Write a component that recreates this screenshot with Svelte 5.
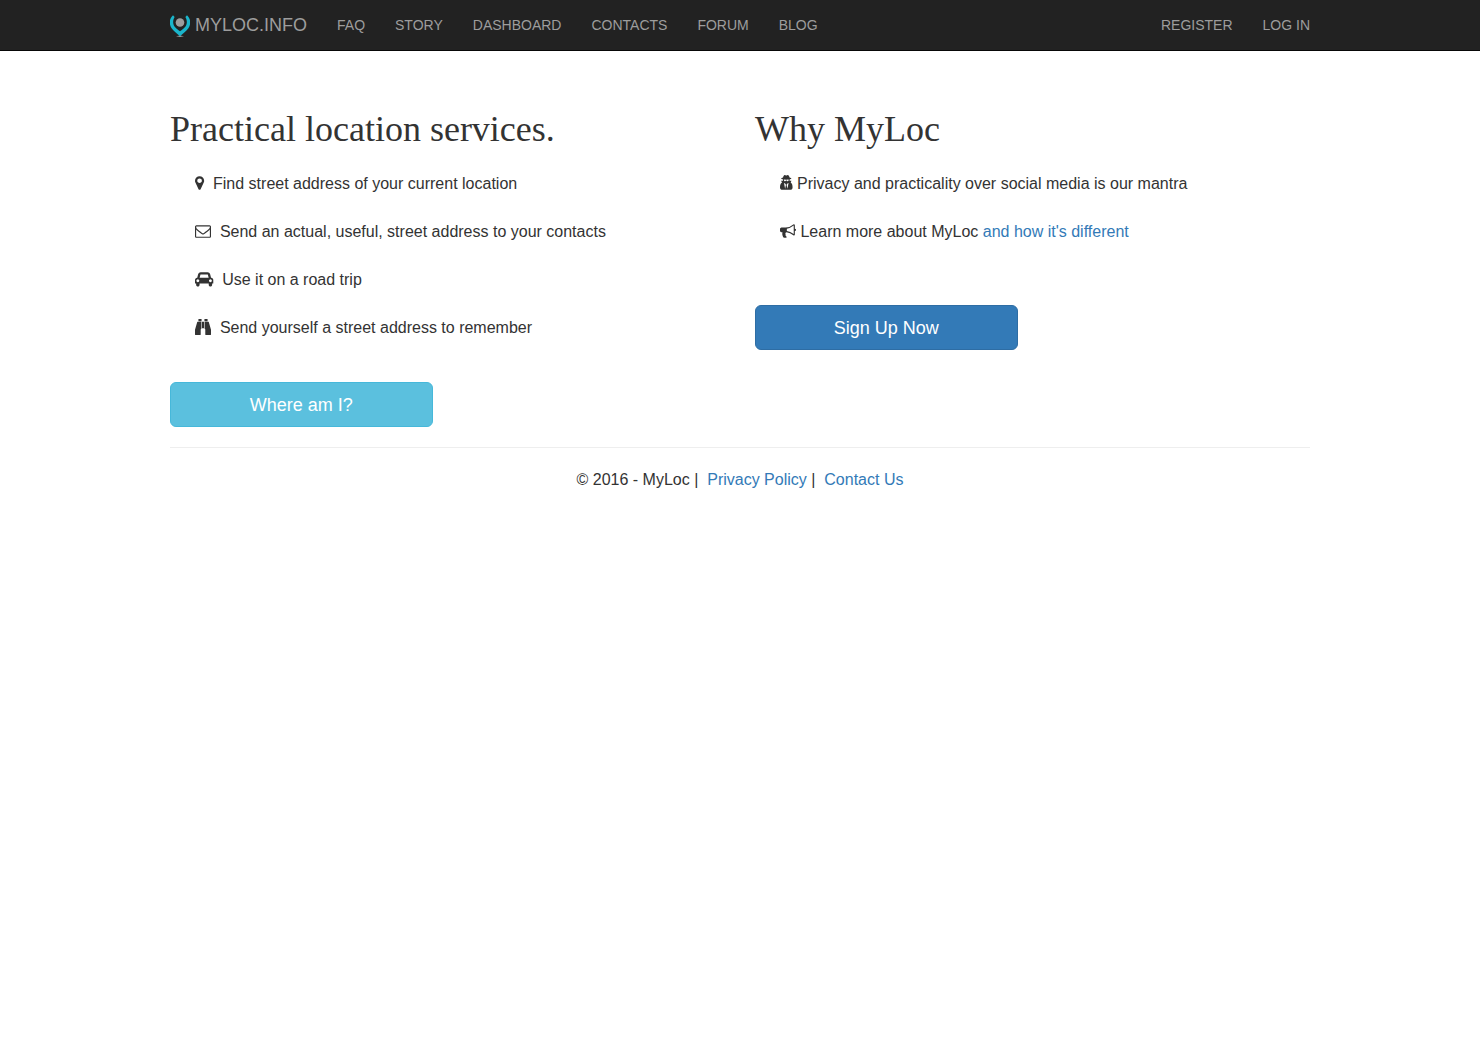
<script>
  const links = ['FAQ', 'Story', 'Dashboard', 'Contacts', 'Forum', 'Blog'];
  const account = ['Register', 'Log in'];

  // Each glyph is drawn on a grid 1792 units high, with its own width.
  const icons = {
    marker: {
      box: '0 0 1024 1792',
      d: 'M768 640q0-106-75-181t-181-75-181 75-75 181 75 181 181 75 181-75 75-181zm256 0q0 109-33 179l-364 774q-16 33-47.500 52t-67.500 19-67.500-19-46.500-52l-365-774q-33-70-33-179 0-212 150-362t362-150 362 150 150 362z'
    },
    envelope: {
      box: '0 0 1792 1792',
      d: 'M1664 1504v-768q-32 36-69 66-268 206-426 338-51 43-83 67t-86.500 48.500-102.500 24.500h-2q-48 0-102.500-24.500t-86.500-48.500-83-67q-158-132-426-338-37-30-69-66v768q0 13 9.500 22.500t22.500 9.500h1472q13 0 22.500-9.500t9.500-22.500zm0-1051v-24.500l-.5-13-3-12.500-5.500-9-9-7.500-14-2.500h-1472q-13 0-22.500 9.500t-9.500 22.500q0 168 147 284 193 152 401 317 6 5 35 29.500t46 37.500 44.500 31.500 50.500 27.500 43 9h2q20 0 43-9t50.500-27.500 44.500-31.500 46-37.500 35-29.500q208-165 401-317 54-43 100.500-115.500t46.500-131.500zm128-37v1088q0 66-47 113t-113 47h-1472q-66 0-113-47t-47-113v-1088q0-66 47-113t113-47h1472q66 0 113 47t47 113z'
    },
    car: {
      box: '0 0 2048 1792',
      d: 'M480 1088q0-66-47-113t-113-47-113 47-47 113 47 113 113 47 113-47 47-113zm36-320h1016l-89-357q-2-8-14-17.500t-21-9.500h-768q-9 0-21 9.500t-14 17.500zm1372 320q0-66-47-113t-113-47-113 47-47 113 47 113 113 47 113-47 47-113zm160-96v384q0 14-9 23t-23 9h-96v128q0 80-56 136t-136 56-136-56-56-136v-128h-1024v128q0 80-56 136t-136 56-136-56-56-136v-128h-96q-14 0-23-9t-9-23v-384q0-93 65.500-158.500t158.500-65.500h28l105-419q23-94 104-157.500t179-63.500h768q98 0 179 63.500t104 157.500l105 419h28q93 0 158.500 65.500t65.500 158.500z'
    },
    binoculars: {
      box: '0 0 1792 1792',
      d: 'M704 320v768q0 26-19 45t-45 19v576q0 26-19 45t-45 19h-512q-26 0-45-19t-19-45v-512l249-873q7-23 31-23zm320 0v704h-256v-704zm768 896v512q0 26-19 45t-45 19h-512q-26 0-45-19t-19-45v-576q-26 0-45-19t-19-45v-768h424q24 0 31 23zm-1056-1184v224h-352v-224q0-14 9-23t23-9h288q14 0 23 9t9 23zm672 0v224h-352v-224q0-14 9-23t23-9h288q14 0 23 9t9 23z'
    },
    secret: {
      box: '0 0 1408 1792',
      d: 'M576 1536l96-448-96-128-128-64zm256 0l128-640-128 64-96 128zm160-1010q-2-4-4-6-10-8-96-8-70 0-167 19-7 2-21 2t-21-2q-97-19-167-19-86 0-96 8-2 2-4 6 2 18 4 27 2 3 7.500 6.500t7.500 10.500q2 4 7.500 20.500t7 20.500 7.500 17 8.500 17 9 14 12 13.500 14 9.500 17.500 8 20.500 4 24.500 2q36 0 59-12.500t32.500-30 14.500-34.500 11.500-29.500 17.500-12.500h12q11 0 17.500 12.500t11.500 29.500 14.500 34.500 32.500 30 59 12.500q13 0 24.500-2t20.500-4 17.500-8 14-9.500 12-13.500 9-14 8.500-17 7.500-17 7-20.500 7.500-20.500q2-7 7.500-10.500t7.500-6.500q2-9 4-27zm416 879q0 121-73 190t-194 69h-874q-121 0-194-69t-73-190q0-61 4.500-118t19-125.500 37.500-123.500 63.500-103.500 93.500-74.500l-90-220h214q-22-64-22-128 0-12 2-32-194-40-194-96 0-57 210-99 17-62 51.500-134t70.500-114q32-37 76-37 30 0 84 31t84 31 84-31 84-31q44 0 76 37 36 42 70.500 114t51.500 134q210 42 210 99 0 56-194 96 7 81-20 160h214l-82 225q63 33 107.500 96.500t65.500 143.500 29 151.500 8 148.500z'
    },
    bullhorn: {
      box: '0 0 1792 1792',
      d: 'M1664 640q53 0 90.500 37.500t37.500 90.500-37.500 90.500-90.500 37.500v384q0 52-38 90t-90 38q-417-347-812-380-58 19-91 66t-31 100.500 40 92.500q-20 33-23 65.500t6 58 33.500 55 48 50 61.500 50.500q-29 58-111.500 83t-168.500 11.500-132-55.500q-7-23-29.500-87.500t-32-94.500-23-89-15-101 3.500-98.500 22-110.500h-122q-66 0-113-47t-47-113v-192q0-66 47-113t113-47h480q435 0 896-384 52 0 90 38t38 90v384zm-128 604v-954q-394 302-768 343v270q377 42 768 341z'
    }
  };

  const features = [
    { icon: 'marker', text: 'Find street address of your current location' },
    { icon: 'envelope', text: 'Send an actual, useful, street address to your contacts' },
    { icon: 'car', text: 'Use it on a road trip' },
    { icon: 'binoculars', text: 'Send yourself a street address to remember' }
  ];
</script>

{#snippet glyph(name)}
  <svg class="icon" viewBox={icons[name].box} aria-hidden="true"><path d={icons[name].d} /></svg>
{/snippet}

<header>
  <nav class="container">
    <a class="brand" href="#home">
      <svg class="logo" viewBox="0 0 20 22" aria-hidden="true">
        <path d="M6 21.200l4-.8 4 .8-4 .8z" />
        <path class="pin" d="M3 .3C-1.300 4.200-.8 9.500 1.600 13.200 3.500 16 7 18.500 10 21.200c3-2.700 6.500-5.200 8.400-8C20.800 9.500 21.300 4.200 17 .3L15.400 2c1.800 3 2 6.800.1 9.600-1.200 1.700-2.600 2.400-3.700 3.300L10 16.300l-1.800-1.400c-1.100-.9-2.500-1.600-3.700-3.300C2.600 8.800 2.800 5 4.600 2z" />
        <circle cx="10" cy="7.500" r="4.300" />
      </svg>
      <span>myloc.info</span>
    </a>
    <ul class="menu">
      {#each links as link}
        <li><a href="#{link.toLowerCase()}">{link}</a></li>
      {/each}
    </ul>
    <ul class="menu account">
      {#each account as link}
        <li><a href="#{link.toLowerCase().replace(' ', '-')}">{link}</a></li>
      {/each}
    </ul>
  </nav>
</header>

<main class="container">
  <div class="columns">
    <section>
      <h1>Practical location services.</h1>
      <ul class="points">
        {#each features as feature}
          <li>{@render glyph(feature.icon)}&nbsp; {feature.text}</li>
        {/each}
      </ul>
      <button class="info" type="button">Where am I?</button>
    </section>
    <section>
      <h1>Why MyLoc</h1>
      <ul class="points short">
        <li>{@render glyph('secret')} Privacy and practicality over social media is our mantra</li>
        <li>{@render glyph('bullhorn')} Learn more about MyLoc <a href="#different">and how it's different</a></li>
      </ul>
      <button class="primary" type="button">Sign Up Now</button>
    </section>
  </div>
  <footer>© 2016 - MyLoc |&nbsp; <a href="#privacy">Privacy Policy</a> |&nbsp; <a href="#contact">Contact Us</a></footer>
</main>

<style>
  :global(body) {
    margin: 0;
    background: #fff;
    color: #333;
    font: 16px/24px "Liberation Sans", Arial, sans-serif;
  }
  .container {
    box-sizing: border-box;
    max-width: 1170px;
    margin: 0 auto;
    padding: 0 15px;
  }
  ul {
    list-style: none;
    margin: 0;
    padding: 0;
  }
  a {
    color: #337ab7;
    text-decoration: none;
  }
  header {
    background: #222;
    border-bottom: 1px solid #080808;
  }
  nav {
    display: flex;
    align-items: center;
    gap: 30px;
    min-height: 50px;
    text-transform: uppercase;
  }
  nav a {
    color: #9d9d9d;
  }
  .brand {
    display: flex;
    align-items: center;
    gap: 5px;
    font-size: 18px;
    line-height: 20px;
  }
  .logo {
    width: 20px;
    height: 22px;
    margin-top: 2px;
    fill: #9d9d9d;
  }
  .pin {
    fill: #1ab5cb;
  }
  .menu {
    display: flex;
    gap: 30px;
    font-size: 14px;
    line-height: 20px;
  }
  .account {
    margin-left: auto;
  }
  .columns {
    display: grid;
    grid-template-columns: repeat(auto-fit, minmax(min(100%, 400px), 1fr));
    gap: 30px;
    padding: 58px 0 20px;
    border-bottom: 1px solid #eee;
  }
  h1 {
    margin: 0 0 23px;
    font: 500 36px/40px "Liberation Serif", "Times New Roman", serif;
  }
  .points {
    display: grid;
    gap: 24px;
    padding-left: 25px;
    margin-bottom: 42px;
  }
  .short {
    margin-bottom: 61px;
  }
  .icon {
    height: 16px;
    vertical-align: -2px;
    fill: currentColor;
    overflow: visible;
  }
  button {
    width: calc(50% - 15px);
    padding: 11px 16px 9px;
    border: 1px solid;
    border-radius: 6px;
    color: #fff;
    font: 18px/23px "Liberation Sans", Arial, sans-serif;
    cursor: pointer;
  }
  .info {
    background: #5bc0de;
    border-color: #46b8da;
  }
  .primary {
    background: #337ab7;
    border-color: #2e6da4;
  }
  footer {
    padding: 20px 0;
    text-align: center;
  }
</style>
